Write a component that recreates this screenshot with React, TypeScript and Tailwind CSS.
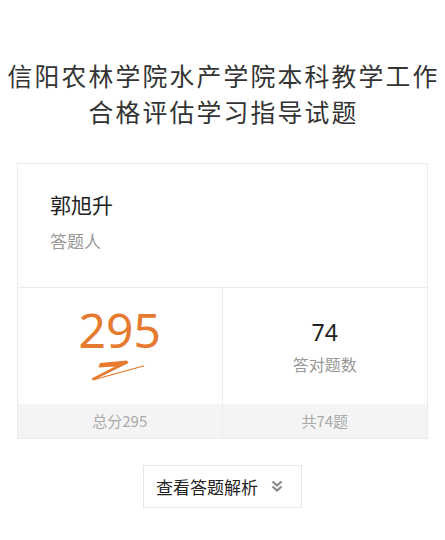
import React from "react";

export default function App() {
  const font = { fontFamily: '"Noto Sans CJK SC", "Noto Sans", sans-serif' };
  return (
    <div className="w-[445px] min-h-[540px] bg-white" style={font}>
      <div className="pt-[57px] pl-[2px] text-center text-[24.8px] leading-[36px] tracking-[2.2px] text-[#333] whitespace-nowrap">
        <div>信阳农林学院水产学院本科教学工作</div>
        <div>合格评估学习指导试题</div>
      </div>
      <div className="mx-[17px] mt-[34px] border border-[#ececec] bg-white">
        <div className="h-[123px] pl-[32px] pt-[25px]">
          <div className="text-[21px] leading-[30px] text-[#222]">郭旭升</div>
          <div className="mt-[10px] text-[17px] leading-[24px] text-[#999]">答题人</div>
        </div>
        <div className="grid grid-cols-2 border-t border-[#ececec]">
          <div className="flex flex-col border-r border-[#ececec]">
            <div className="flex h-[116px] flex-col items-center pt-[14px]">
              <div className="text-[48px] leading-[56px] text-[#e67a2e]" style={{ fontFamily: '"Noto Sans", sans-serif' }}>295</div>
              <svg width="60" height="24" viewBox="0 0 60 24" className="mt-[0px] ml-[-2px]">
                <path d="M11 5 L38 2.5 L39.5 5 L9 20 L55 7.2 L55.5 8.2 L4 22.5 L2.5 20.5 L26 8.5 L9.5 9.5 Z" fill="#e67a2e" />
              </svg>
            </div>
            <div className="flex h-[34px] items-center justify-center bg-[#f4f4f4] text-[15px] text-[#aaa]">总分295</div>
          </div>
          <div className="flex flex-col">
            <div className="flex h-[116px] flex-col items-center pt-[28px]">
              <div className="text-[23px] leading-[32px] text-[#222]" style={{ fontFamily: '"Noto Sans", sans-serif' }}>74</div>
              <div className="mt-[4px] text-[16px] leading-[24px] text-[#999]">答对题数</div>
            </div>
            <div className="flex h-[34px] items-center justify-center bg-[#f4f4f4] text-[15px] text-[#aaa]">共74题</div>
          </div>
        </div>
      </div>
      <div className="mt-[26px] flex justify-center">
        <div className="flex h-[43px] w-[159px] items-center border border-[#e6e6e6] pl-[12px] text-[17px] text-[#222]">
          <span>查看答题解析</span>
          <svg width="14" height="14" viewBox="0 0 14 14" className="ml-[12px] mt-[-2px]">
            <path d="M2.5 2.5 L7 6.5 L11.5 2.5" stroke="#888" strokeWidth="2.2" fill="none" />
            <path d="M2.5 7.5 L7 11.5 L11.5 7.5" stroke="#888" strokeWidth="2.2" fill="none" />
          </svg>
        </div>
      </div>
    </div>
  );
}
